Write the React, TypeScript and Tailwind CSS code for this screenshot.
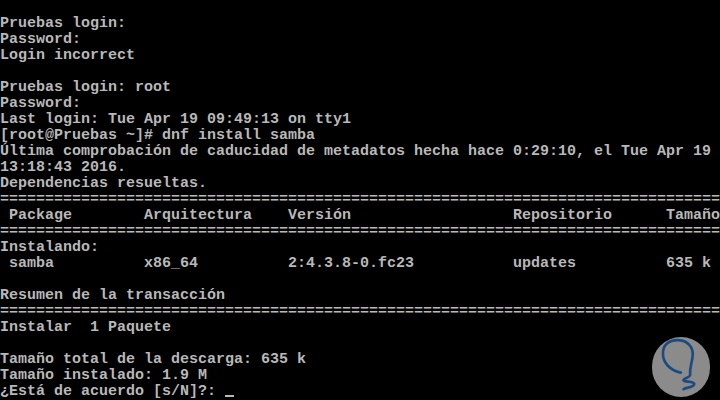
import React from 'react';

const sep = '='.repeat(80);

// fixed console columns: 1, 16, 32, 57, 74
const row = (a: string, b: string, c: string, d: string, e: string) =>
  ' ' + a.padEnd(15) + b.padEnd(16) + c.padEnd(25) + d.padEnd(17) + e;

const lines: string[] = [
  '',
  'Pruebas login:',
  'Password:',
  'Login incorrect',
  '',
  'Pruebas login: root',
  'Password:',
  'Last login: Tue Apr 19 09:49:13 on tty1',
  '[root@Pruebas ~]# dnf install samba',
  'Última comprobación de caducidad de metadatos hecha hace 0:29:10, el Tue Apr 19',
  '13:18:43 2016.',
  'Dependencias resueltas.',
  sep,
  row('Package', 'Arquitectura', 'Versión', 'Repositorio', 'Tamaño'),
  sep,
  'Instalando:',
  row('samba', 'x86_64', '2:4.3.8-0.fc23', 'updates', '635 k'),
  '',
  'Resumen de la transacción',
  sep,
  'Instalar  1 Paquete',
  '',
  'Tamaño total de la descarga: 635 k',
  'Tamaño instalado: 1.9 M',
];

function Logo() {
  return (
    <div className="absolute left-[652px] top-[337px] w-[58px] h-[60px] rounded-full bg-[#8b8b8b]">
      <svg viewBox="65 35 175 180" width="58" height="60">
        <path
          d="M152 142 C 120 136, 98 112, 98 84 C 98 58, 116 44, 142 44 C 168 44, 188 60, 188 86 C 188 108, 178 122, 180 150 C 178 158, 164 156, 160 164 C 158 172, 196 166, 192 178 C 188 188, 168 186, 160 192"
          fill="none"
          stroke="#1d4a80"
          strokeWidth="8"
          strokeLinecap="round"
          strokeLinejoin="round"
        />
      </svg>
    </div>
  );
}

export default function App() {
  return (
    <div className="relative w-[720px] h-[400px] bg-black overflow-hidden">
      <div className="font-['Liberation_Mono',monospace] font-bold text-[15px] leading-[16px] text-[#b8b8b8] whitespace-pre">
        {lines.map((l, i) => (
          <div key={i} className="h-4">
            {l}
          </div>
        ))}
        <div className="h-4">
          ¿Está de acuerdo [s/N]?: <span className="inline-block w-[9px] h-[2px] bg-[#b8b8b8] align-[-2px]" />
        </div>
      </div>
      <Logo />
    </div>
  );
}
